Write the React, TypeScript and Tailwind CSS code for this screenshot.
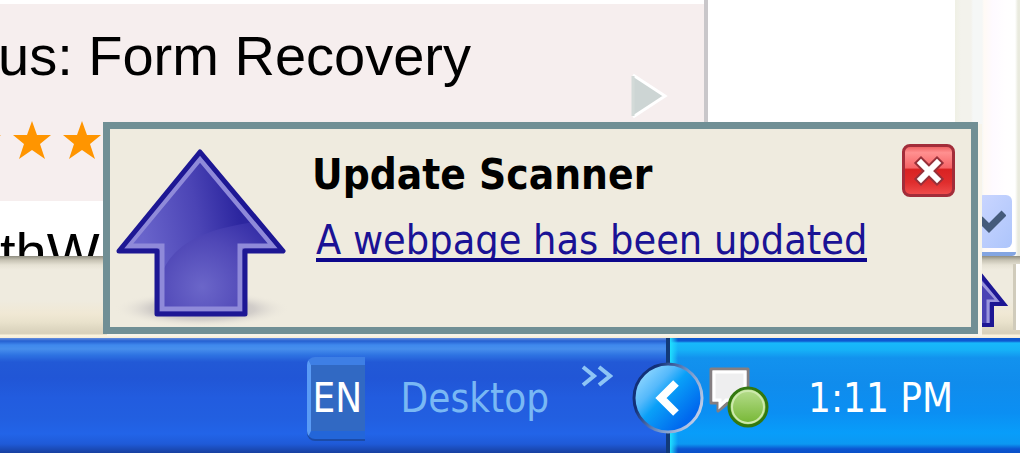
import type { ReactNode } from "react";

const Star: React.FC = () => (
	<svg viewBox="0 0 40 40" className="size-10 shrink-0" fill="#ff9500">
		<path d="M20 1 L25 15 L39 15 L28 24 L33 39 L20 30 L7 39 L12 24 L1 15 L15 15 Z" />
	</svg>
);

const AddonList: React.FC = () => (
	<section className="flex-1 min-w-0 overflow-hidden border-r-4 border-[#c9c7ca] pt-1 font-['Liberation_Sans',Arial,sans-serif] text-[56px] text-black whitespace-nowrap">
		<div className="flex h-[197px] justify-between bg-[#f6eeee] pr-9">
			<div>
				<h2 className="-ml-0.5 pt-5 leading-[64px]">us: Form Recovery</h2>
				<div className="-ml-[38px] mt-8 flex gap-[10px]">
					<Star />
					<Star />
					<Star />
				</div>
			</div>
			<svg viewBox="0 0 38 48" className="mt-[68px] h-12 w-[38px]">
				<path d="M3 3 L35 24 L3 45" fill="#cdd5d4" stroke="#fff" strokeWidth="3" />
				<path d="M3 4 V44" stroke="#d3dad8" strokeWidth="3" />
			</svg>
		</div>
		<div className="h-[55px] overflow-hidden bg-white pt-5">
			<p className="leading-[64px]">thW</p>
		</div>
	</section>
);

const Scrollbar: React.FC = () => (
	<div className="flex w-[65px] flex-col items-end justify-end bg-[linear-gradient(90deg,#eff0e5_0,#f3f2ec_6px,#f3f2ec_16px,#f5f7f6_18px,#f5f7f6_27px,#fffaf5_29px,#fefaff_38px,#fffeff_50px,#fff_60px,#e9eade_63px)]">
		<button
			type="button"
			aria-label="Scroll down"
			className="mr-2 flex h-[53px] w-[35px] items-center justify-end rounded-md bg-linear-to-br from-[#cbd6ff] to-[#adc5fb] pr-[6px]"
		>
			<svg viewBox="0 0 26 24" className="h-6 w-[26px]" fill="none" stroke="#455b7b" strokeWidth="7">
				<path d="M0 9 L9 18 L24 3" />
			</svg>
		</button>
		<div className="mt-1 mr-1 h-1 w-[42px] rounded-br bg-[#83a5e2]" />
	</div>
);

const ArrowShape: React.FC<{ id: string }> = ({ id }) => (
	<>
		<defs>
			<linearGradient id={`${id}-head`} x1="0" y1="0.6" x2="1" y2="0.4">
				<stop offset="0.15" stopColor="#6964cb" />
				<stop offset="0.5" stopColor="#4b44b5" />
				<stop offset="0.75" stopColor="#2c269f" />
			</linearGradient>
			<radialGradient id={`${id}-glow`} gradientUnits="userSpaceOnUse" cx="92" cy="158" r="85">
				<stop offset="0" stopColor="#6b66c9" />
				<stop offset="0.55" stopColor="#5048b7" />
				<stop offset="1" stopColor="#322ba5" />
			</radialGradient>
			<clipPath id={`${id}-clip`}>
				<path d="M90 24 L172 121 H135 V186 H47 V121 H10 Z" />
			</clipPath>
		</defs>
		<path d="M90 24 L172 121 H135 V186 H47 V121 H10 Z" fill={`url(#${id}-head)`} />
		<path
			d="M50 148 C62 116 90 100 152 92 L180 130 V190 H50 Z"
			fill={`url(#${id}-glow)`}
			clipPath={`url(#${id}-clip)`}
		/>
		<path
			d="M90 30 L163 117 H130 V180 H52 V117 H18 Z"
			fill="none"
			stroke="#8f8ad9"
			strokeWidth="5"
		/>
		<path
			d="M90 23 L173 122 H135 V185 H47 V122 H9 Z"
			fill="none"
			stroke="#1d1794"
			strokeWidth="5"
			strokeLinejoin="round"
		/>
	</>
);

const UpdateArrow: React.FC = () => (
	<svg viewBox="0 0 182 198" className="h-[198px] w-[182px] shrink-0">
		<defs>
			<radialGradient id="shadow">
				<stop offset="0" stopColor="#77728c" stopOpacity="0.6" />
				<stop offset="0.6" stopColor="#8f8b98" stopOpacity="0.3" />
				<stop offset="1" stopColor="#efebdf" stopOpacity="0" />
			</radialGradient>
		</defs>
		<ellipse cx="92" cy="180" rx="88" ry="18" fill="url(#shadow)" />
		<ArrowShape id="big" />
	</svg>
);

const Notification: React.FC = () => (
	<div
		role="alert"
		className="absolute top-[122px] right-[42px] left-[103px] flex border-[7px] border-[#708f95] bg-[#efebdf] shadow-[4px_2px_0_#f7f4ea]"
	>
		<UpdateArrow />
		<div className="min-w-0 flex-1 pt-[26px] pl-6 whitespace-nowrap">
			<h1 className="-ml-1 text-[42px] leading-10 font-bold text-black">Update Scanner</h1>
			<a
				href="#updates"
				className="mt-[27px] inline-block overflow-hidden border-b-4 border-[#0d078c] align-top text-[41px] leading-9 text-[#1a1295]"
			>
				A webpage has been updated
			</a>
		</div>
		<button
			type="button"
			aria-label="Close"
			className="mt-[15px] mr-4 flex size-[53px] shrink-0 items-center justify-center rounded-lg border-[3px] border-[#a22d3a] bg-[linear-gradient(#ef6465_0,#ff9090_12%,#f66467_44%,#d92222_48%,#df2d2d_75%,#ef4b4b_100%)]"
		>
			<svg viewBox="0 0 32 32" className="size-8">
				<path d="M8 8 L24 24 M24 8 L8 24" stroke="#973039" strokeWidth="10" strokeLinecap="square" />
				<path d="M8 8 L24 24 M24 8 L8 24" stroke="#fff" strokeWidth="6" strokeLinecap="square" />
			</svg>
		</button>
	</div>
);

const StatusBar: React.FC = () => (
	<footer className="flex h-[82px] items-start justify-end bg-[linear-gradient(#8f8d80_0,#c5c1b2_4px,#e6e2d4_9px,#efebdf_14px,#efebdf_44px,#f0e8d4_58px,#e9e2cc_66px,#d9d2bc_76px,#d9d2bc_78px,#fbf4df_79px,#f4edda_82px)]">
		<svg viewBox="0 0 28 58" className="mt-[14px] mr-[5px] h-[58px] w-7">
			<path d="M0 4 L24 34 H12 V54 H0 Z" fill="#4a42b4" />
			<path d="M0 11 L18 31 H8 V54" fill="none" stroke="#9a95dd" strokeWidth="3" />
			<path d="M0 4 L24 34 H12 V55 H0" fill="none" stroke="#1d1794" strokeWidth="4" />
		</svg>
		<div className="mt-2 h-[66px] w-[7px] border-l-[3px] border-[#d0cbbb] bg-white" />
	</footer>
);

const TrayClock: React.FC<{ children: ReactNode }> = ({ children }) => (
	<div className="flex h-full w-[354px] items-center border-l-4 border-[#123a78] bg-[linear-gradient(90deg,#20e0ff_0,transparent_8px),linear-gradient(#0e58d0_0,#0e58d0_3px,#18b8fb_5px,#16b1f7_12px,#1292ee_20px,#108cec_45px,#0b8ff3_75px,#089dfa_95px,#0c98f2_106px,#0b55d1_111px,#0950c8_115px)]">
		{children}
	</div>
);

const Taskbar: React.FC = () => (
	<nav className="flex h-[115px] items-center justify-end overflow-hidden bg-[linear-gradient(#6790dd_0,#2560d2_3px,#3f88ed_7px,#478eec_11px,#2e73e2_17px,#2259d6_24px,#2156d6_40px,#225cdf_60px,#225fe0_80px,#2264e8_96px,#1f5ad7_106px,#173f9f_115px)] text-[40px] whitespace-nowrap">
		<button
			type="button"
			className="mt-1 flex h-[82px] w-[58px] items-center overflow-hidden rounded-l-lg border-y-8 border-t-[#3e7fe5] border-b-[#2366d9] border-l-4 border-l-[#5a9bf5] bg-[#3169c3] pl-[2px] text-white shadow-[0_2px_0_#1b4ba8]"
		>
			EN
		</button>
		<button type="button" className="mt-1 ml-9 text-[#79b8f4]">
			Desktop
		</button>
		<button type="button" aria-label="More toolbars" className="mr-[53px] mb-10 ml-8">
			<svg viewBox="0 0 32 22" className="h-[22px] w-8" fill="none" stroke="#8ec5f5" strokeWidth="4">
				<path d="M2 2 L13 11 L2 20 M18 2 L29 11 L18 20" />
			</svg>
		</button>
		<TrayClock>
			<button type="button" aria-label="Show hidden icons" className="mt-1 -ml-[38px] shrink-0">
				<svg viewBox="0 0 72 72" className="size-[72px]">
					<defs>
						<linearGradient id="orb" x1="0.1" y1="0.15" x2="0.8" y2="0.8">
							<stop offset="0" stopColor="#8ed6ff" />
							<stop offset="0.3" stopColor="#55b9fb" />
							<stop offset="0.5" stopColor="#0aa0f8" />
							<stop offset="1" stopColor="#0068ee" />
						</linearGradient>
						<linearGradient id="rim" x1="0" y1="0.2" x2="1" y2="0.7">
							<stop offset="0.2" stopColor="#123078" />
							<stop offset="0.6" stopColor="#7394c8" />
							<stop offset="1" stopColor="#c3d0ea" />
						</linearGradient>
					</defs>
					<circle cx="36" cy="36" r="34" fill="url(#orb)" stroke="url(#rim)" strokeWidth="3" />
					<path d="M44 21 L29 36 L44 51" fill="none" stroke="#fff" strokeWidth="8" />
				</svg>
			</button>
			<svg viewBox="0 0 62 62" className="mt-1 ml-1 h-[62px] w-[62px] shrink-0">
				<defs>
					<linearGradient id="ball" x1="0" y1="0" x2="0" y2="1">
						<stop offset="0" stopColor="#b9df91" />
						<stop offset="1" stopColor="#72b42e" />
					</linearGradient>
				</defs>
				<path
					d="M3 2 H40 V36 H20 L10 44 V36 H3 Z"
					fill="#eeeeef"
					stroke="#857e80"
					strokeWidth="3"
					strokeLinejoin="round"
				/>
				<path d="M6 5 H37 V33 H18 L12 39 V33 H6 Z" fill="none" stroke="#fff" strokeWidth="3" />
				<circle cx="40" cy="40" r="19" fill="url(#ball)" stroke="#33780f" strokeWidth="3" />
				<circle cx="40" cy="40" r="16" fill="none" stroke="#cde9ac" strokeWidth="2" />
			</svg>
			<time className="mt-1 ml-[38px] text-white">1:11 PM</time>
		</TrayClock>
	</nav>
);

const App: React.FC = () => {
	return (
		<div className="relative overflow-hidden bg-white font-['DejaVu_Sans_Condensed',Tahoma,'DejaVu_Sans',sans-serif]">
			<main className="flex">
				<AddonList />
				<div className="w-[247px]" />
				<Scrollbar />
			</main>
			<StatusBar />
			<Taskbar />
			<Notification />
		</div>
	);
};

export default App;
